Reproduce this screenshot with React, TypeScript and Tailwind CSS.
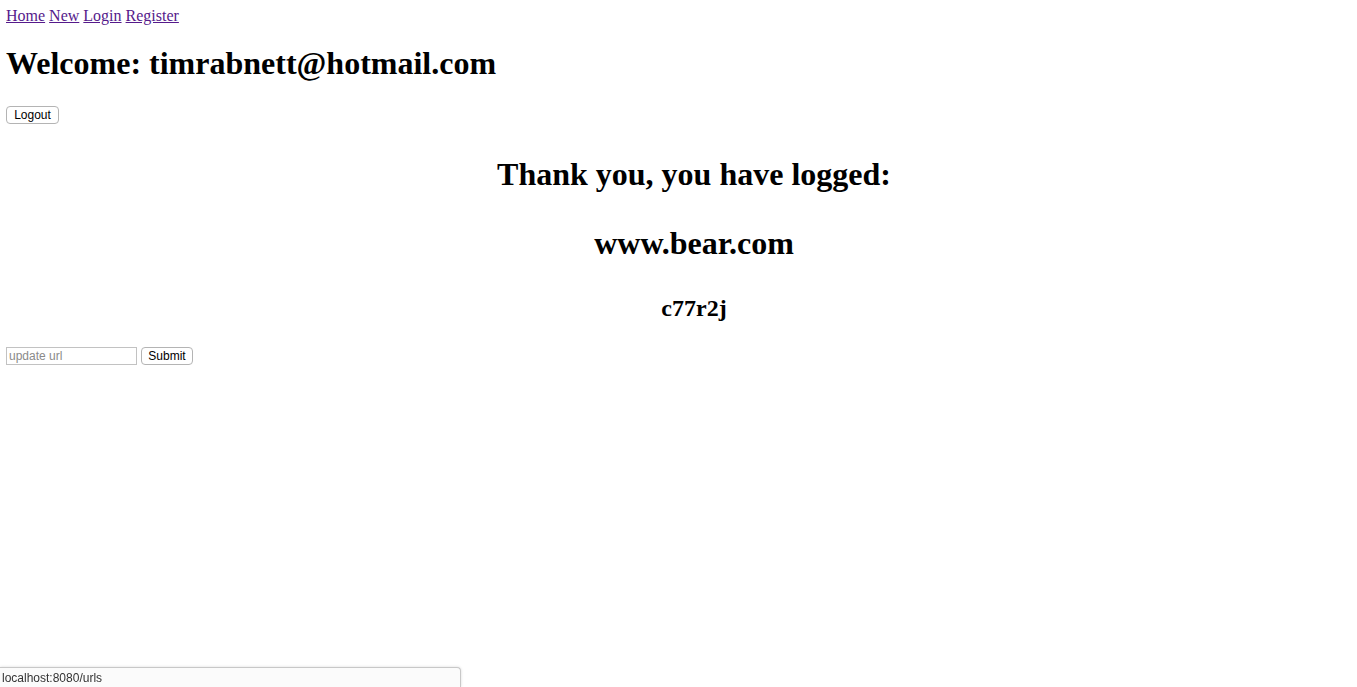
export default function App() {
  return (
    <div className="min-h-screen bg-white px-[6px] pt-[7px] font-['Liberation_Serif',serif] text-black">
      <nav className="text-[16px] leading-[18px]">
        <a href="#" className="text-[#551a8b] underline">Home</a>{" "}
        <a href="#" className="text-[#551a8b] underline">New</a>{" "}
        <a href="#" className="text-[#551a8b] underline">Login</a>{" "}
        <a href="#" className="text-[#551a8b] underline">Register</a>
      </nav>

      <h1 className="mt-[20px] text-[32px] font-bold leading-[37px]">Welcome: timrabnett@hotmail.com</h1>

      <form className="mt-[24px] flex">
        <button
          type="button"
          className="h-[18px] w-[53px] rounded-[4px] border border-[#b4b4b4] bg-white font-['Liberation_Sans',sans-serif] text-[12px] leading-[16px] text-black"
        >
          Logout
        </button>
      </form>

      <div className="pl-[31px] text-center">
        <h1 className="mt-[32px] text-[32px] font-bold leading-[37px]">Thank you, you have logged:</h1>
        <h1 className="mt-[32px] text-[32px] font-bold leading-[37px]">www.bear.com</h1>
        <h2 className="mt-[32px] text-[24px] font-bold leading-[28px]">c77r2j</h2>
      </div>

      <form className="mt-[25px] flex items-center gap-[4px]">
        <input
          type="text"
          placeholder="update url"
          className="h-[18px] w-[131px] border border-[#c2c2c2] bg-white px-[2px] font-['Liberation_Sans',sans-serif] text-[12px] leading-[16px] text-black outline-none placeholder:text-[#8a8a8a]"
        />
        <button
          type="button"
          className="h-[18px] w-[52px] rounded-[4px] border border-[#b4b4b4] bg-white font-['Liberation_Sans',sans-serif] text-[12px] leading-[16px] text-black"
        >
          Submit
        </button>
      </form>

      {/* browser status bubble */}
      <div className="fixed bottom-0 left-0 flex h-[20px] w-[461px] items-center rounded-tr-[4px] border-t border-r border-[#c8c8c8] bg-[#fbfbfb] pl-[2px] font-['Liberation_Sans',sans-serif] text-[12px] text-[#333] shadow-[0_0_3px_rgba(0,0,0,0.15)]">
        localhost:8080/urls
      </div>
    </div>
  );
}
